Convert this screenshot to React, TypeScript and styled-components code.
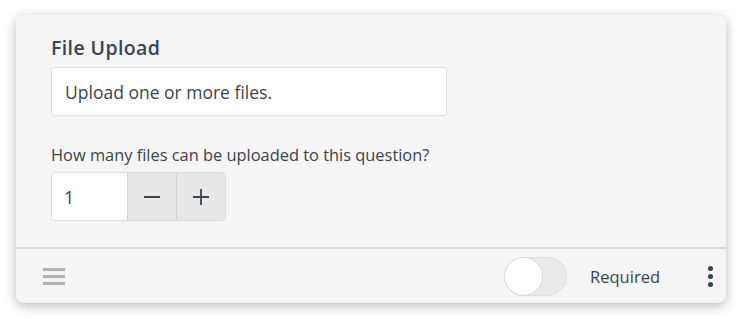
import React, { useState } from "react";
import styled, { createGlobalStyle } from "styled-components";

const GlobalStyle = createGlobalStyle`
  html, body {
    margin: 0;
    padding: 0;
    background: #ffffff;
    font-family: "Open Sans", Lato, Arial, sans-serif;
    color: #3b4450;
  }
`;

const Page = styled.div`
  padding: 15px 16px 16px 16px;
`;

const Card = styled.div`
  width: 710px;
  height: 288px;
  box-sizing: border-box;
  background: #f5f5f5;
  border-radius: 8px;
  box-shadow: 0 3px 12px rgba(0, 0, 0, 0.28);
  display: flex;
  flex-direction: column;
  overflow: hidden;
`;

const Body = styled.div`
  flex: 1;
  padding: 22px 35px 0 35px;
  display: flex;
  flex-direction: column;
  border-bottom: 2px solid #d9d9d9;
`;

const Label = styled.div`
  font-size: 19.5px;
  font-weight: 600;
  line-height: 22px;
  margin-bottom: 8px;
  letter-spacing: 0.4px;
`;

const TextInput = styled.input`
  width: 396px;
  height: 49px;
  box-sizing: border-box;
  border: 1px solid #dcdcdc;
  border-radius: 3px;
  background: #fff;
  padding: 0 13px;
  font-family: inherit;
  font-size: 17.5px;
  color: #3b4450;
  outline: none;
`;

const Question = styled.div`
  font-size: 16.4px;
  line-height: 20px;
  margin-top: 29px;
  margin-bottom: 7px;
`;

const Stepper = styled.div`
  display: flex;
  width: 175px;
  height: 49px;
  border: 1px solid #dcdcdc;
  border-radius: 4px;
  overflow: hidden;
  box-sizing: border-box;
`;

const NumberField = styled.input`
  width: 75px;
  border: none;
  background: #fff;
  padding: 0 12px;
  box-sizing: border-box;
  font-family: inherit;
  font-size: 18px;
  color: #3b4450;
  outline: none;
`;

const StepButton = styled.button`
  width: 49px;
  border: none;
  border-left: 1px solid #d4d4d4;
  background: #e8e8e8;
  color: #3b4450;
  display: flex;
  align-items: center;
  justify-content: center;
  padding: 0;
  cursor: pointer;
`;

const Footer = styled.div`
  height: 54px;
  display: flex;
  align-items: center;
  padding: 0 13px 0 27px;
`;

const Handle = styled.div`
  display: flex;
  flex-direction: column;
  gap: 4px;
  span {
    display: block;
    width: 22px;
    height: 3px;
    background: #b3b3b3;
  }
`;

const Spacer = styled.div`
  flex: 1;
`;

const Toggle = styled.button<{ $on: boolean }>`
  position: relative;
  width: 63px;
  height: 39px;
  border-radius: 20px;
  border: 1px solid #dedede;
  background: ${({ $on }) => ($on ? "#3b82f6" : "#ebebeb")};
  padding: 0;
  cursor: pointer;
  box-sizing: border-box;

  &::after {
    content: "";
    position: absolute;
    top: 0;
    left: ${({ $on }) => ($on ? "25px" : "0")};
    width: 37px;
    height: 37px;
    border-radius: 50%;
    background: #fff;
    box-shadow: 0 0 0 1px #dcdcdc;
  }
`;

const RequiredText = styled.span`
  font-size: 16.5px;
  margin: 0 48px 0 23px;
`;

const Kebab = styled.div`
  display: flex;
  flex-direction: column;
  gap: 3px;
  span {
    width: 5px;
    height: 5px;
    border-radius: 50%;
    background: #3b4450;
  }
`;

const Minus = () => (
  <svg width="18" height="18" viewBox="0 0 18 18">
    <path d="M1 9h16" stroke="currentColor" strokeWidth="1.8" />
  </svg>
);

const Plus = () => (
  <svg width="18" height="18" viewBox="0 0 18 18">
    <path d="M1 9h16M9 1v16" stroke="currentColor" strokeWidth="1.8" />
  </svg>
);

const App = () => {
  const [count, setCount] = useState(1);
  const [required, setRequired] = useState(false);
  return (
    <Page>
      <GlobalStyle />
      <Card>
        <Body>
          <Label>File Upload</Label>
          <TextInput defaultValue="Upload one or more files." />
          <Question>How many files can be uploaded to this question?</Question>
          <Stepper>
            <NumberField value={count} readOnly />
            <StepButton onClick={() => setCount(Math.max(1, count - 1))}>
              <Minus />
            </StepButton>
            <StepButton onClick={() => setCount(count + 1)}>
              <Plus />
            </StepButton>
          </Stepper>
        </Body>
        <Footer>
          <Handle>
            <span />
            <span />
            <span />
          </Handle>
          <Spacer />
          <Toggle $on={required} onClick={() => setRequired(!required)} />
          <RequiredText>Required</RequiredText>
          <Kebab>
            <span />
            <span />
            <span />
          </Kebab>
        </Footer>
      </Card>
    </Page>
  );
};

export default App;
